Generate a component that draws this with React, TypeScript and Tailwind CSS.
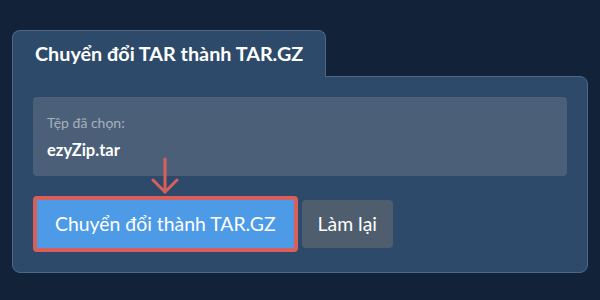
export default function App() {
  return (
    <div className="w-[600px] h-[300px] bg-[#112239] pt-[30px] px-3" style={{ fontFamily: 'Lato, "Noto Sans", sans-serif' }}>
      <div className="w-[576px]">
        <div className="relative z-10 -mb-px w-[314px] h-[47px] flex items-center pl-[22px] bg-[#2d4a6a] border border-b-0 border-[#4c6889] rounded-t-lg">
          <h1 className="text-[19.8px] font-bold text-white leading-none">Chuyển đổi TAR thành TAR.GZ</h1>
        </div>
        <div className="bg-[#2d4a6a] border border-[#4c6889] rounded-lg rounded-tl-none px-5 pt-5 pb-5">
          <div className="bg-[#4b6078] rounded px-[14px] pt-[17px] pb-[16px]">
            <div className="text-[14px] leading-[18px] text-[#a6b0bd]">Tệp đã chọn:</div>
            <div className="mt-[8px] text-[16.5px] leading-5 font-bold text-white">ezyZip.tar</div>
          </div>
          <div className="relative mt-5 flex items-center gap-1">
            <svg className="absolute left-[118px] -top-[39px]" width="30" height="38" viewBox="0 0 30 38" fill="none" stroke="#d9605a" strokeWidth="3" strokeLinecap="round" strokeLinejoin="round">
              <path d="M14 2v33" />
              <path d="M2 23l12 12 12-12" />
            </svg>
            <button className="h-[56px] px-[18px] border-4 border-[#d9605a] rounded bg-[#4d9be6] text-white text-[19.4px]">
              Chuyển đổi thành TAR.GZ
            </button>
            <button className="h-[48px] px-[16px] rounded bg-[#4f5e6e] text-white text-[19.4px]">
              Làm lại
            </button>
          </div>
        </div>
      </div>
    </div>
  )
}
